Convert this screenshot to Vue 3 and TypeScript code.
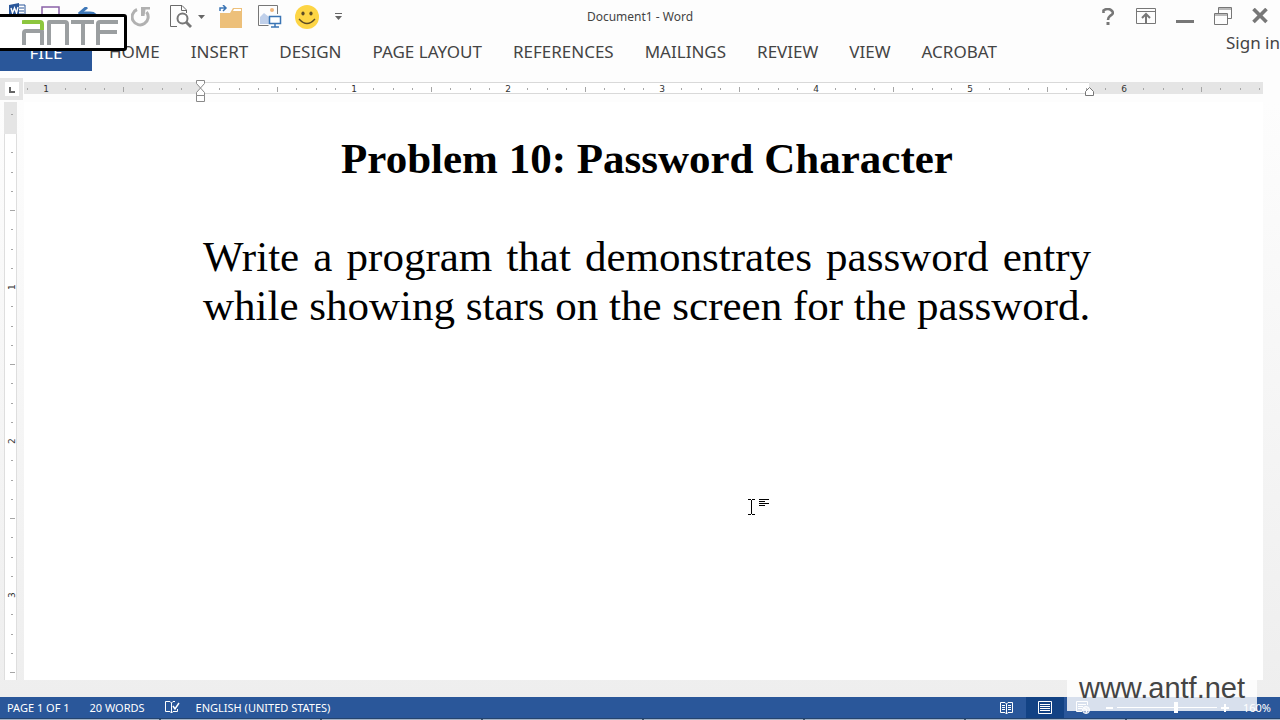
<script setup lang="ts">
interface Tick {
  at: number
  kind: 'minor' | 'half' | 'label'
  label: string
}

const INCH = 154
const tabs: string[] = ['HOME', 'INSERT', 'DESIGN', 'PAGE LAYOUT', 'REFERENCES', 'MAILINGS', 'REVIEW', 'VIEW', 'ACROBAT']

function makeTicks(origin: number, from: number, to: number): Tick[] {
  const list: Tick[] = []
  for (let i = from; i <= to; i++) {
    if (i === 0) continue
    const at = Math.round(origin + (i * INCH) / 8)
    if (i % 8 === 0) list.push({ at, kind: 'label', label: String(Math.abs(i / 8)) })
    else list.push({ at, kind: i % 4 === 0 ? 'half' : 'minor', label: '' })
  }
  return list
}

const across = makeTicks(176, -9, 55)
const down = makeTicks(31, -1, 28)
</script>

<template>
  <div class="window">
    <header class="titlebar">
      <div class="quick">
        <button class="tool word" aria-label="Word">
          <svg width="18" height="18" viewBox="0 0 18 18"><path d="M8 2h8v13H8z" fill="#fff" stroke="#2a579a" /><path d="M10 5h5M10 8h5M10 11h5" stroke="#2a579a" /><path d="M0 2l10-2v17L0 15z" fill="#2a579a" /><path d="M2 5l1.500 5 2-5 2 5L9 4" fill="none" stroke="#fff" stroke-width="1.400" /></svg>
        </button>
        <button class="tool save" aria-label="Save">
          <svg width="20" height="22" viewBox="0 0 20 22"><path d="M1 1h17v19H1z" fill="#fff" stroke="#8a62a8" stroke-width="1.500" /><path d="M5 14h9v6H5z" fill="#8a62a8" /></svg>
        </button>
        <button class="tool undo" aria-label="Undo">
          <svg width="22" height="20" viewBox="0 0 22 20"><path d="M3 6h9q7 0 7 8" fill="none" stroke="#3f78b8" stroke-width="3" /><path d="M9 0L2 6l7 6" fill="none" stroke="#3f78b8" stroke-width="3" /></svg>
        </button>
        <button class="tool caret" aria-label="Undo history">
          <svg width="7" height="4" viewBox="0 0 7 4"><path d="M0 0h7L3.500 4z" fill="#666" /></svg>
        </button>
        <button class="tool redo" aria-label="Repeat">
          <svg width="20" height="20" viewBox="0 0 20 20"><path d="M6 2.500A8 8 0 1 0 15.500 5" fill="none" stroke="#b1b1b1" stroke-width="3" /><path d="M10 0h9v2.500h-4.500l-1 6.500h-3.500z" fill="#b1b1b1" /></svg>
        </button>
        <button class="tool preview" aria-label="Print preview">
          <svg width="22" height="23" viewBox="0 0 22 23"><path d="M7 21.500H.500V.500H12L16.500 5v3M11.500 .500V5.500H16.500" fill="none" stroke="#6a6a6a" /><circle cx="12.500" cy="13.500" r="5" fill="#fff" stroke="#777" stroke-width="2" /><path d="M16 17l5 5" stroke="#777" stroke-width="2.800" /></svg>
        </button>
        <button class="tool caret2" aria-label="Preview options">
          <svg width="7" height="4" viewBox="0 0 7 4"><path d="M0 0h7L3.500 4z" fill="#666" /></svg>
        </button>
        <button class="tool open" aria-label="Open">
          <svg width="24" height="24" viewBox="0 0 24 24"><path d="M1 8h10l3-5h9v20H1z" fill="#edc07a" /><path d="M14 6l1-2h7v2z" fill="#fff" /><path d="M1 6V3h5M4 0l3 3-3 3" fill="none" stroke="#3b75b5" stroke-width="1.500" /></svg>
        </button>
        <button class="tool show" aria-label="Picture on screen">
          <svg width="24" height="23" viewBox="0 0 24 23"><path d="M19.500 9V.500H.500v20h10" fill="none" stroke="#777" /><circle cx="14" cy="5" r="2" fill="#f1b67c" /><path d="M2 19v-7l4-4 5 4v7z" fill="#c0d0ea" /><path d="M11.500 11.500h11v7h-11z" fill="#fff" stroke="#3b75b5" stroke-width="1.500" /><path d="M17 18v4M13 22h8" stroke="#3b75b5" stroke-width="1.500" /></svg>
        </button>
        <button class="tool smile" aria-label="Send a smile">
          <svg width="24" height="24" viewBox="0 0 24 24"><circle cx="12" cy="12" r="12" fill="#fdd545" /><ellipse cx="8" cy="8.500" rx="1.600" ry="2" fill="#5c4b25" /><ellipse cx="16" cy="8.500" rx="1.600" ry="2" fill="#5c4b25" /><path d="M4 14q8 9 16 0" fill="none" stroke="#5c4b25" stroke-width="1.300" /></svg>
        </button>
        <button class="tool more" aria-label="Customize toolbar">
          <svg width="7" height="7" viewBox="0 0 7 7"><path d="M0 .500h7" stroke="#666" /><path d="M0 3h7L3.500 7z" fill="#666" /></svg>
        </button>
      </div>
      <div class="title">Document1 - Word</div>
      <div class="controls">
        <button class="tool help" aria-label="Help">
          <svg width="12" height="18" viewBox="0 0 12 18"><path d="M1.500 5V2.500Q6-.500 9.500 2.500T8 8Q6 9.500 6 12" fill="none" stroke="#777" stroke-width="2.600" /><path d="M4.500 14h3v3h-3z" fill="#777" /></svg>
        </button>
        <button class="tool" aria-label="Ribbon display options">
          <svg width="20" height="18" viewBox="0 0 20 18"><path d="M.500 .500h19v15H.500zM.500 3.500h19" fill="none" stroke="#777" /><path d="M10 15V7M6 10l4-4 4 4" fill="none" stroke="#777" stroke-width="2" /></svg>
        </button>
        <button class="tool" aria-label="Minimize">
          <svg width="18" height="16" viewBox="0 0 18 16"><path d="M0 11h18v3H0z" fill="#777" /></svg>
        </button>
        <button class="tool" aria-label="Restore">
          <svg width="18" height="20" viewBox="0 0 18 20"><path d="M4.500 6V.500h13v11H14M4.500 2h13" fill="none" stroke="#777" /><path d="M.500 6.500h13v11H.500zM.500 8h13" fill="none" stroke="#777" /></svg>
        </button>
        <button class="tool" aria-label="Close">
          <svg width="16" height="17" viewBox="0 0 16 17"><path d="M1.500 1l13 13M14.500 1l-13 13" stroke="#777" stroke-width="3.600" /></svg>
        </button>
      </div>
    </header>

    <nav class="ribbon" aria-label="Ribbon">
      <button class="file">FILE</button>
      <button v-for="tab in tabs" :key="tab" class="tab">{{ tab }}</button>
      <a class="signin" href="#">Sign in</a>
    </nav>

    <div class="ruler-row">
      <button class="corner" aria-label="Left tab stop">
        <svg width="14" height="14" viewBox="0 0 14 14"><rect width="14" height="14" fill="#fff" /><path d="M5 5v5h5" fill="none" stroke="#666" stroke-width="2" /></svg>
      </button>
      <svg class="across" width="100%" height="24">
        <rect y="4" width="100%" height="12" fill="#e5e5e5" />
        <rect x="176" y="5" width="889" height="10" fill="#fff" />
        <path d="M176 4.500h889M176 15.500h889" stroke="#d9d9d9" />
        <template v-for="t in across" :key="t.at">
          <text v-if="t.kind === 'label'" :x="t.at" y="14" class="num">{{ t.label }}</text>
          <rect v-else :x="t.at" :y="t.kind === 'half' ? 9 : 10" width="1" :height="t.kind === 'half' ? 5 : 2" fill="#a6a6a6" />
        </template>
        <path d="M172.500 2.500h8v3l-4 4.500 4 4.500v3h-8v-3l4-4.500-4-4.500zM172.500 17.500h8v6h-8z" fill="#fff" stroke="#8a8a8a" />
        <path d="M1061.500 17.500v-4l4-4 4 4v4z" fill="#fff" stroke="#777" />
      </svg>
    </div>

    <main class="workspace">
      <svg class="down" width="13" height="100%">
        <rect width="13" height="100%" fill="#dedede" />
        <rect width="13" height="32" fill="#e5e5e5" />
        <rect x="1" y="32" width="11" height="100%" fill="#fff" />
        <template v-for="t in down" :key="t.at">
          <text v-if="t.kind === 'label'" x="11" :y="t.at" :transform="`rotate(-90 11 ${t.at})`" class="num">{{ t.label }}</text>
          <rect v-else :x="t.kind === 'half' ? 6 : 7" :y="t.at" :width="t.kind === 'half' ? 5 : 2" height="1" fill="#a6a6a6" />
        </template>
      </svg>
      <article class="page">
        <h1>Problem 10: Password Character</h1>
        <p>Write a program that demonstrates password entry while showing stars on the screen for the password.</p>
      </article>
    </main>

    <footer class="status">
      <span class="pages">PAGE 1 OF 1</span>
      <span class="words">20 WORDS</span>
      <button class="tool proof" aria-label="Proofing">
        <svg width="15" height="13" viewBox="0 0 15 13"><path d="M10 .500H8L6.500 2 5 .500H.500v10H5L6.500 12 8 10.500h4.500V8M6.500 2v10" fill="none" stroke="#fff" /><path d="M8 5l2 3 4-6" fill="none" stroke="#fff" stroke-width="1.500" /></svg>
      </button>
      <span class="lang">ENGLISH (UNITED STATES)</span>
      <div class="views">
        <button class="view" aria-label="Read mode">
          <svg width="13" height="12" viewBox="0 0 13 12"><path d="M6.500 2L5 .500H.500v10H5L6.500 12 8 10.500h4.500V.500H8L6.500 2v10M2 3.500h3M2 5.500h3M2 7.500h3M8 3.500h3M8 5.500h3M8 7.500h3" fill="none" stroke="#fff" /></svg>
        </button>
        <button class="view current" aria-label="Print layout">
          <svg width="14" height="13" viewBox="0 0 14 13"><path d="M.500 .500h13v12H.500zM2 3.500h10M2 5.500h10M2 7.500h10M2 9.500h10" fill="none" stroke="#fff" /></svg>
        </button>
        <button class="view" aria-label="Web layout">
          <svg width="14" height="13" viewBox="0 0 14 13"><path d="M6 10.500H.500V.500h11V4M2 3.500h8M2 5.500h5M2 7.500h4" fill="none" stroke="#fff" /><circle cx="10" cy="9" r="3.500" fill="#9fb2d3" stroke="#fff" /><path d="M8 7l3 2-1 3" fill="none" stroke="#fff" /></svg>
        </button>
        <button class="step" aria-label="Zoom out"><svg width="7" height="9" viewBox="0 0 7 9"><path d="M0 4h7v2H0z" fill="#fff" /></svg></button>
        <input class="zoom" type="range" min="10" max="238" value="145" aria-label="Zoom" />
        <button class="step" aria-label="Zoom in"><svg width="8" height="9" viewBox="0 0 8 9"><path d="M0 4h8v2H0zM3 1h2v8H3z" fill="#fff" /></svg></button>
        <button class="percent">160%</button>
      </div>
    </footer>
    <div class="taskbar"></div>

    <div class="logo">
      <svg width="98" height="28" viewBox="0 0 98 28" role="img" aria-label="ANTF">
        <g fill="none" stroke="#9b9fa1" stroke-width="4" stroke-linejoin="round">
          <path d="M2 27V15Q2 13 4 13H20V27" />
          <path d="M27 27V4H43Q45 4 45 6V27" />
          <path d="M49 4H72M61 4V27" />
          <path d="M76 27V6Q76 4 78 4H96M76 14H95" />
        </g>
        <path d="M0 6Q0 4 2 4H18Q20 4 20 6V12" fill="none" stroke="#8cc63e" stroke-width="4" />
      </svg>
    </div>

    <svg class="pointer" width="22" height="18" viewBox="0 0 22 18" aria-hidden="true">
      <path d="M0 1.500h3M4 1.500h3M3.500 2v14M0 16.500h3M4 16.500h3M11 1.500h10M11 3.500h6M11 5.500h10M11 7.500h6" stroke="#000" fill="none" />
    </svg>

    <div class="watermark">www.antf.net</div>
  </div>
</template>

<style>
body {
  margin: 0;
}
</style>

<style scoped>
.window {
  position: relative;
  display: flex;
  flex-direction: column;
  min-height: 100vh;
  overflow: hidden;
  background: #fdfdfd;
  color: #444;
  font-family: "Noto Sans", "Open Sans", sans-serif;
}
button {
  padding: 0;
  border: 0;
  background: none;
  color: inherit;
  font-family: inherit;
}
svg {
  display: block;
  flex: none;
}
.titlebar {
  display: grid;
  grid-template-columns: 1fr auto 1fr;
  height: 32px;
}
.quick,
.controls {
  display: flex;
  align-items: center;
}
.quick {
  padding-left: 9px;
}
.word {
  align-self: flex-start;
  margin-top: 3px;
}
.save { margin-left: 14px; }
.undo { margin-left: 17px; }
.caret { margin-left: 10px; }
.redo { margin-left: 14px; }
.preview { margin-left: 19px; }
.caret2 { margin-left: 6px; }
.open { margin-left: 14px; }
.show { margin-left: 15px; }
.smile { margin-left: 13px; }
.more { margin-left: 16px; }
.title {
  font-size: 12px;
  line-height: 33px;
}
.controls {
  justify-content: flex-end;
  gap: 20px;
  padding-right: 12px;
}
.help {
  margin-right: 2px;
}
.ribbon {
  display: flex;
  gap: 1px;
  height: 39px;
  font-size: 17px;
}
.file {
  width: 92px;
  margin-right: 1px;
  padding-top: 2px;
  background: #2a579a;
  color: #fff;
  font-size: 17px;
}
.tab {
  padding: 0 15px;
  font-size: 17px;
  white-space: nowrap;
}
.signin {
  margin-left: auto;
  color: #444;
  line-height: 22px;
  text-decoration: none;
  white-space: nowrap;
}
.ruler-row {
  display: flex;
  height: 31px;
  padding-right: 17px;
}
.corner {
  display: grid;
  place-items: center;
  width: 23px;
  height: 22px;
  margin: 7px 1px 0 0;
  flex: none;
  background: #e5e5e5;
}
.across {
  flex: 1;
  min-width: 0;
  margin-top: 7px;
}
.num {
  fill: #333;
  font-family: "DejaVu Sans", sans-serif;
  font-size: 9px;
  text-anchor: middle;
}
.workspace {
  display: flex;
  flex: 1;
  padding: 0 17px 17px 4px;
  background: linear-gradient(#fdfdfd, #eee);
}
.down {
  height: auto;
}
.page {
  flex: 1;
  margin-left: 7px;
  padding: 32px 172px 0 179px;
  background: #fff;
  color: #000;
  font-family: "Liberation Serif", serif;
  font-size: 43px;
  line-height: 49px;
}
h1 {
  margin: 0 0 49px;
  font-size: 43px;
  line-height: 49px;
  text-align: center;
}
p {
  margin: 0;
  text-align: justify;
}
.status {
  display: flex;
  align-items: center;
  height: 21px;
  padding: 0 9px 0 7px;
  background: #2a579a;
  color: #fff;
  font-size: 11px;
  white-space: nowrap;
}
.taskbar {
  height: 1px;
  border-top: 1px solid #24446f;
  background: repeating-linear-gradient(90deg, #a5b4c6 0 159px, #40566f 159px 161px);
}
.words { margin-left: 20px; }
.proof { margin-left: 20px; }
.lang { margin-left: 16px; }
.views {
  display: flex;
  align-items: center;
  align-self: stretch;
  margin-left: auto;
}
.view {
  display: grid;
  place-items: center;
  align-self: stretch;
  width: 38px;
}
.current {
  background: #124284;
}
.step {
  margin: 0 4px;
}
.zoom {
  width: 100px;
  height: 12px;
  margin: 0;
  appearance: none;
  background: linear-gradient(#fff, #fff) center / 100% 1px no-repeat;
}
.zoom::-webkit-slider-thumb {
  width: 4px;
  height: 11px;
  appearance: none;
  background: #fff;
}
.percent {
  margin-left: 10px;
  font-size: 11px;
}
.logo {
  position: absolute;
  top: 14px;
  left: -4px;
  padding: 1px 4px 2px 23px;
  border: 3px solid #000;
  border-radius: 3px;
  background: #fff;
}
.pointer {
  position: absolute;
  top: 498px;
  left: 748px;
}
.watermark {
  position: absolute;
  right: 23px;
  bottom: 9px;
  padding: 0 12px 7px;
  background: rgba(255, 255, 255, 0.82);
  color: #444;
  font-family: "Liberation Sans Narrow", "Liberation Sans", sans-serif;
  font-size: 29px;
  line-height: 32px;
}
</style>
